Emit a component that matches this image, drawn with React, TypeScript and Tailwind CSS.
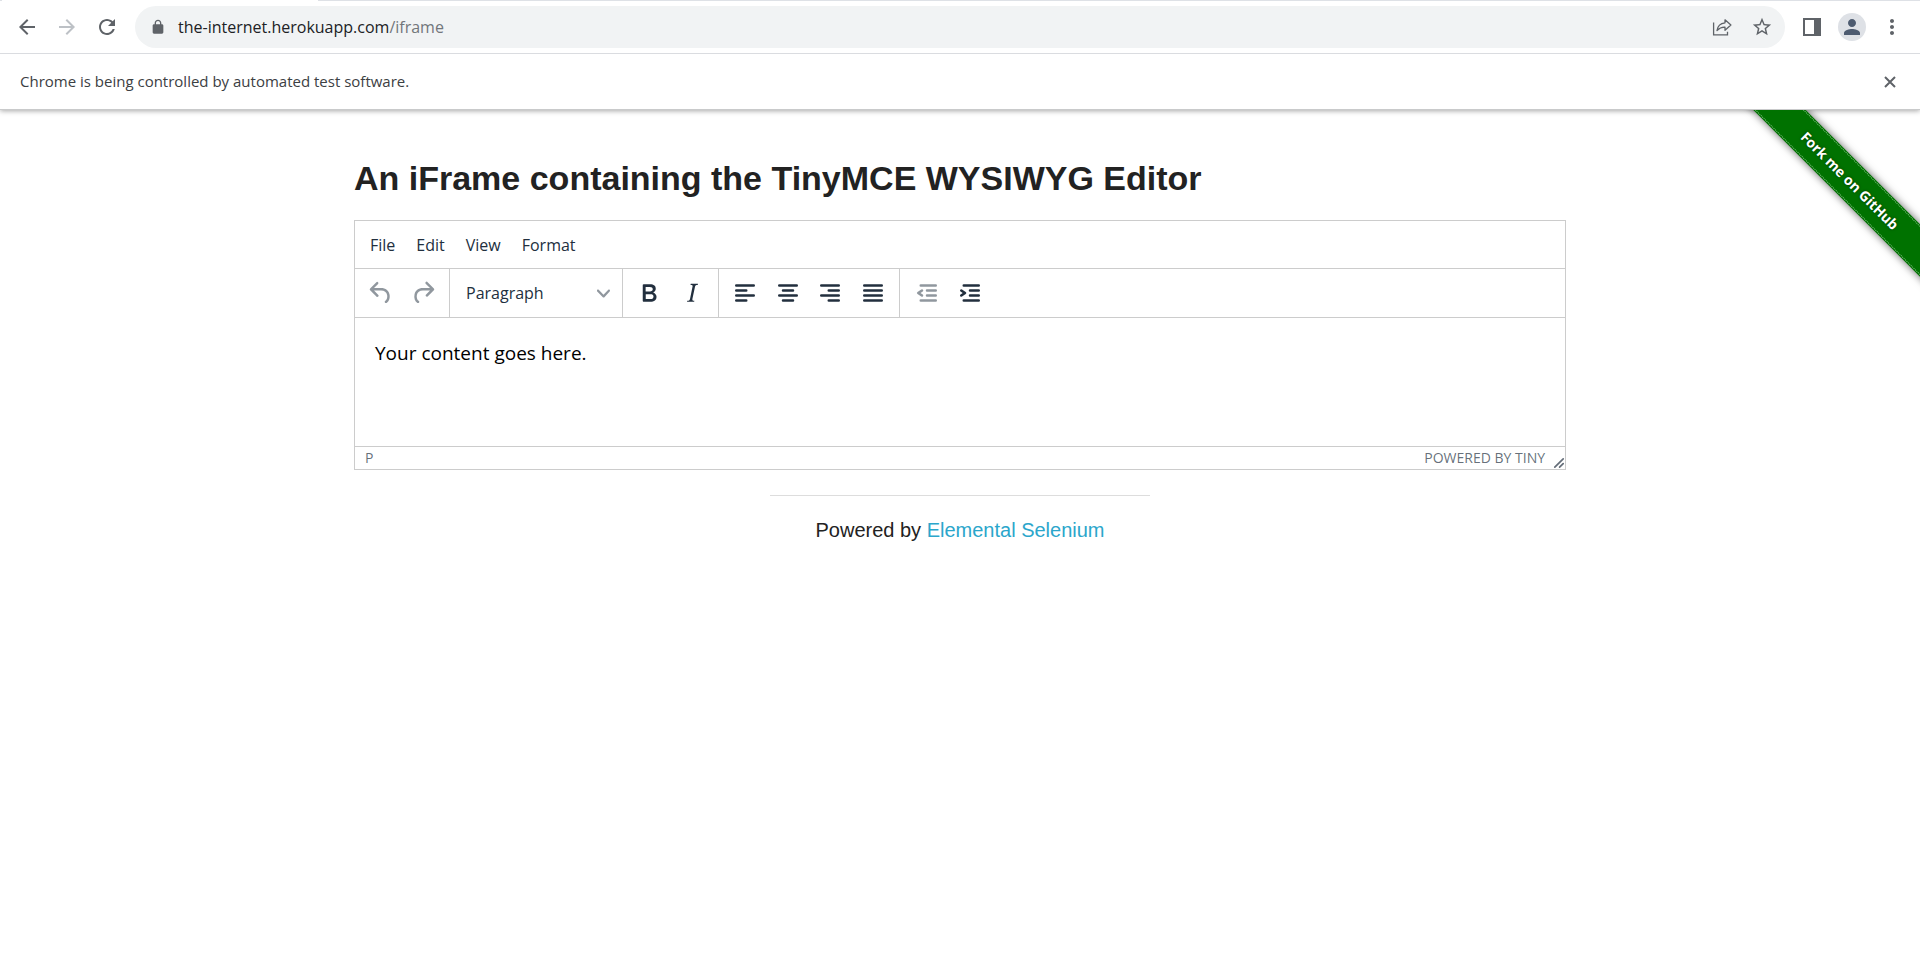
import type { ReactNode } from "react";

type IconProps = { d: string; className?: string; viewBox?: string };

function Icon({ d, className = "size-6", viewBox = "0 0 24 24" }: IconProps) {
  return (
    <svg viewBox={viewBox} className={className} fill="currentColor" fillRule="evenodd" aria-hidden="true">
      <path d={d} />
    </svg>
  );
}

const lock =
  "M18 8h-1V6c0-2.76-2.24-5-5-5S7 3.240 7 6v2H6c-1.100 0-2 .9-2 2v10c0 1.100.9 2 2 2h12c1.100 0 2-.9 2-2V10c0-1.100-.9-2-2-2zM9 6c0-1.660 1.340-3 3-3s3 1.340 3 3v2H9V6z";
const star =
  "M22 9.240l-7.190-.62L12 2 9.190 8.630 2 9.240l5.460 4.730L5.820 21 12 17.270 18.180 21l-1.630-7.030L22 9.240zM12 15.400l-3.760 2.270 1-4.280-3.320-2.880 4.380-.38L12 6.100l1.710 4.040 4.380.38-3.320 2.880 1 4.280L12 15.400z";

const editorIcons = {
  undo: "M6.400 8H12c3.700 0 6.200 2 6.800 5.100.6 2.700-.4 5.600-2.300 6.800a1 1 0 0 1-1-1.800c1.100-.6 1.800-2.700 1.400-4.600-.5-2.100-2.100-3.500-4.900-3.500H6.400l3.300 3.300a1 1 0 1 1-1.400 1.400l-5-5a1 1 0 0 1 0-1.400l5-5a1 1 0 0 1 1.400 1.400L6.400 8Z",
  redo: "M17.600 10H12c-2.800 0-4.400 1.400-4.900 3.500-.4 2 .3 4 1.400 4.600a1 1 0 1 1-1 1.800c-2-1.200-2.900-4.100-2.300-6.800.6-3 3-5.100 6.800-5.100h5.600l-3.300-3.300a1 1 0 1 1 1.400-1.400l5 5a1 1 0 0 1 0 1.400l-5 5a1 1 0 0 1-1.400-1.400l3.300-3.300Z",
  bold: "M7.800 19c-.3 0-.5 0-.6-.2l-.2-.5V5.700c0-.2 0-.4.2-.5l.6-.2h5c1.500 0 2.700.3 3.500 1 .7.6 1.100 1.400 1.100 2.500a3 3 0 0 1-.6 1.900c-.4.6-1 1-1.600 1.200.4.1.9.3 1.300.6s.8.7 1 1.200c.4.4.5 1 .5 1.600 0 1.300-.4 2.300-1.300 3-.8.7-2.100 1-3.800 1H7.800Zm5-8.300c.6 0 1.200-.1 1.600-.5.4-.3.6-.7.6-1.300 0-1.100-.8-1.700-2.300-1.700H9.300v3.500h3.400Zm.5 6c.7 0 1.300-.1 1.700-.4.4-.4.6-.9.6-1.500s-.2-1-.7-1.400c-.4-.3-1-.4-2-.4H9.400v3.800h4Z",
  italic:
    "M16.700 4.700l-.1.9h-.3c-.6 0-1 0-1.400.3-.3.3-.4.6-.5 1.100l-2.100 9.800v.6c0 .5.4.8 1.400.8h.2l-.2.8H8l.2-.8h.2c1.100 0 1.800-.5 2-1.500l2-9.800.1-.5c0-.6-.4-.8-1.400-.8h-.3l.2-.9h5.800Z",
  left: "M5 5h14a1 1 0 0 1 0 2H5a1 1 0 1 1 0-2Zm0 4h8a1 1 0 0 1 0 2H5a1 1 0 1 1 0-2Zm0 8h8a1 1 0 0 1 0 2H5a1 1 0 0 1 0-2Zm0-4h14a1 1 0 0 1 0 2H5a1 1 0 0 1 0-2Z",
  center:
    "M5 5h14a1 1 0 0 1 0 2H5a1 1 0 1 1 0-2Zm3 4h8a1 1 0 0 1 0 2H8a1 1 0 1 1 0-2Zm0 8h8a1 1 0 0 1 0 2H8a1 1 0 0 1 0-2Zm-3-4h14a1 1 0 0 1 0 2H5a1 1 0 0 1 0-2Z",
  right:
    "M5 5h14a1 1 0 0 1 0 2H5a1 1 0 1 1 0-2Zm6 4h8a1 1 0 0 1 0 2h-8a1 1 0 0 1 0-2Zm0 8h8a1 1 0 0 1 0 2h-8a1 1 0 0 1 0-2Zm-6-4h14a1 1 0 0 1 0 2H5a1 1 0 0 1 0-2Z",
  justify:
    "M5 5h14a1 1 0 0 1 0 2H5a1 1 0 1 1 0-2Zm0 4h14a1 1 0 0 1 0 2H5a1 1 0 1 1 0-2Zm0 4h14a1 1 0 0 1 0 2H5a1 1 0 0 1 0-2Zm0 4h14a1 1 0 0 1 0 2H5a1 1 0 0 1 0-2Z",
  outdent:
    "M7 5h12a1 1 0 0 1 0 2H7a1 1 0 1 1 0-2Zm5 4h7a1 1 0 0 1 0 2h-7a1 1 0 0 1 0-2Zm0 4h7a1 1 0 0 1 0 2h-7a1 1 0 0 1 0-2Zm-5 4h12a1 1 0 0 1 0 2H7a1 1 0 0 1 0-2Zm1.600-3.800a1 1 0 0 1-1.200 1.600l-3-2a1 1 0 0 1 0-1.600l3-2a1 1 0 0 1 1.200 1.600L6.800 12l1.800 1.200Z",
  indent:
    "M7 5h12a1 1 0 0 1 0 2H7a1 1 0 1 1 0-2Zm5 4h7a1 1 0 0 1 0 2h-7a1 1 0 0 1 0-2Zm0 4h7a1 1 0 0 1 0 2h-7a1 1 0 0 1 0-2Zm-5 4h12a1 1 0 0 1 0 2H7a1 1 0 0 1 0-2Zm-2.600-3.800L6.200 12l-1.800-1.200a1 1 0 0 1 1.200-1.600l3 2a1 1 0 0 1 0 1.600l-3 2a1 1 0 1 1-1.200-1.600Z",
};

function IconButton({ label, children, className = "" }: { label: string; children: ReactNode; className?: string }) {
  return (
    <button type="button" aria-label={label} className={`flex shrink-0 items-center justify-center ${className}`}>
      {children}
    </button>
  );
}

function TabStripEdge() {
  return (
    <div className="flex h-px bg-[#dee1e6]">
      <div className="ml-[2px] w-[316px] bg-white" />
    </div>
  );
}

function BrowserBar() {
  return (
    <header className="relative z-10 flex h-[53px] items-center border-b border-[#dadce0] bg-white pr-2 pl-[7px] text-[#5f6368]">
      <IconButton label="Back" className="size-10">
        <Icon d="M20 11H7.830l5.590-5.590L12 4l-8 8 8 8 1.410-1.410L7.830 13H20v-2z" />
      </IconButton>
      <IconButton label="Forward" className="size-10 text-[#bdc1c6]">
        <Icon d="M12 4l-1.410 1.410L16.170 11H4v2h12.170l-5.580 5.590L12 20l8-8-8-8z" />
      </IconButton>
      <IconButton label="Reload" className="size-10">
        <Icon d="M17.650 6.350C16.200 4.900 14.210 4 12 4c-4.420 0-7.990 3.580-7.990 8s3.570 8 7.990 8c3.730 0 6.840-2.550 7.730-6h-2.080c-.82 2.330-3.040 4-5.650 4-3.310 0-6-2.690-6-6s2.690-6 6-6c1.660 0 3.140.69 4.220 1.780L13 11h7V4l-2.350 2.350z" />
      </IconButton>
      <div className="ml-2 flex h-[42px] flex-1 items-center rounded-full bg-[#f1f3f4] pr-[3px] pl-[15px]">
        <Icon d={lock} className="size-4" />
        <a
          href="#"
          aria-label="Address"
          className="ml-3 flex-1 font-['Open_Sans','Noto_Sans',sans-serif] text-base text-[#202124]"
        >
          the-internet.herokuapp.com<span className="text-[#72767b]">/iframe</span>
        </a>
        <IconButton label="Share" className="size-10">
          <svg viewBox="0 0 20 20" className="size-5" fill="none" stroke="currentColor" aria-hidden="true">
            <path strokeWidth="1.300" d="M1.600 5.500v12.300h13.900v-3.100" />
            <path
              strokeWidth="1.300"
              strokeLinejoin="round"
              d="M13 2.800 18.900 8l-5.900 5.200v-3c-3.500-.2-5.700.9-8 3.300.6-4.200 3.200-7.200 8-7.700v-3Z"
            />
          </svg>
        </IconButton>
        <IconButton label="Bookmark this tab" className="size-10">
          <Icon d={star} className="size-[22px]" />
        </IconButton>
      </div>
      <div className="ml-[7px] flex items-center">
        <IconButton label="Side panel" className="size-10">
          <svg viewBox="0 0 18 18" className="size-[18px]" fill="currentColor" fillRule="evenodd" aria-hidden="true">
            <path d="M0 0h18v18H0V0Zm2 2v14h9V2H2Z" />
          </svg>
        </IconButton>
        <IconButton label="Profile" className="size-10">
          <span className="flex size-7 items-center justify-center rounded-full bg-[#dee1e6] text-[#4d5b70]">
            <Icon
              d="M12 12c2.210 0 4-1.790 4-4s-1.790-4-4-4-4 1.790-4 4 1.790 4 4 4zm0 2c-2.670 0-8 1.340-8 4v2h16v-2c0-2.660-5.330-4-8-4z"
              className="size-6"
            />
          </span>
        </IconButton>
        <IconButton label="Menu" className="size-10">
          <Icon
            d="M12 8c1.100 0 2-.9 2-2s-.9-2-2-2-2 .9-2 2 .9 2 2 2zm0 2c-1.100 0-2 .9-2 2s.9 2 2 2 2-.9 2-2-.9-2-2-2zm0 6c-1.100 0-2 .9-2 2s.9 2 2 2 2-.9 2-2-.9-2-2-2z"
          />
        </IconButton>
      </div>
    </header>
  );
}

function InfoBar() {
  return (
    <div className="relative flex h-14 items-center justify-between border-b border-[#c9cacb] bg-white pr-[10px] pl-5 shadow-[0_1px_5px_rgba(0,0,0,0.35)]">
      <p className="font-['Open_Sans','Noto_Sans',sans-serif] text-[15px] text-[#3c4043]">
        Chrome is being controlled by automated test software.
      </p>
      <IconButton label="Close" className="size-10 text-[#5f6368]">
        <svg viewBox="0 0 12 12" className="size-3" fill="none" stroke="currentColor" strokeWidth="2" aria-hidden="true">
          <path d="m1 1 10 10M11 1 1 11" />
        </svg>
      </IconButton>
    </div>
  );
}

function Ribbon() {
  return (
    <div className="absolute top-0 right-0 size-[190px] overflow-hidden">
      <a
        href="#"
        className="absolute top-[52px] -left-5 flex h-[37px] w-[280px] rotate-45 items-center justify-center bg-[#007200] py-px font-['Open_Sans',sans-serif] text-sm font-bold text-white shadow-[0_0_8px_rgba(0,0,0,0.6)]"
      >
        <span className="flex h-full w-full items-center justify-center border-y border-dotted border-[#7fbf7f] [text-shadow:0_0_3px_rgba(0,0,0,0.5)]">
          Fork me on GitHub
        </span>
      </a>
    </div>
  );
}

function ToolButton({ label, icon, disabled }: { label: string; icon: string; disabled?: boolean }) {
  return (
    <button
      type="button"
      aria-label={label}
      disabled={disabled}
      className="flex h-10 flex-1 items-center justify-center text-[#222f3e] disabled:text-[#222f3e]/50"
    >
      <Icon d={icon} className="size-[30px]" />
    </button>
  );
}

function Editor() {
  return (
    <section className="border border-[#cccccc] bg-white font-['Open_Sans','Noto_Sans',sans-serif] text-base text-[#222f3e]">
      <nav className="flex h-[47px] items-center gap-[21px] px-[15px]">
        {["File", "Edit", "View", "Format"].map((item) => (
          <button key={item} type="button">
            {item}
          </button>
        ))}
      </nav>
      <div className="flex h-[49px] items-stretch border-t border-[#cccccc]">
        <div className="flex w-[95px] items-center border-r border-[#cccccc] px-[5px]">
          <ToolButton label="Undo" icon={editorIcons.undo} disabled />
          <ToolButton label="Redo" icon={editorIcons.redo} disabled />
        </div>
        <div className="relative flex w-[173px] items-center border-r border-[#cccccc]">
          <select aria-label="Blocks" className="h-10 w-full appearance-none bg-transparent pr-8 pl-4">
            <option>Paragraph</option>
          </select>
          <Icon
            d="M8.700 2.200c.3-.3.8-.3 1 0 .4.4.4.9 0 1.200L5.700 7.800c-.3.3-.9.3-1.200 0L.2 3.400a.8.8 0 0 1 0-1.200c.3-.3.8-.3 1.100 0L5 6l3.700-3.800Z"
            viewBox="0 0 10 10"
            className="pointer-events-none absolute right-3 size-[13px] text-[#222f3e]/50"
          />
        </div>
        <div className="flex w-24 items-center border-r border-[#cccccc] px-[5px]">
          <ToolButton label="Bold" icon={editorIcons.bold} />
          <ToolButton label="Italic" icon={editorIcons.italic} />
        </div>
        <div className="flex w-[181px] items-center border-r border-[#cccccc] px-[5px]">
          <ToolButton label="Align left" icon={editorIcons.left} />
          <ToolButton label="Align center" icon={editorIcons.center} />
          <ToolButton label="Align right" icon={editorIcons.right} />
          <ToolButton label="Justify" icon={editorIcons.justify} />
        </div>
        <div className="flex w-24 items-center px-[5px]">
          <ToolButton label="Decrease indent" icon={editorIcons.outdent} disabled />
          <ToolButton label="Increase indent" icon={editorIcons.indent} />
        </div>
      </div>
      <textarea
        aria-label="Rich Text Area"
        defaultValue="Your content goes here."
        className="block h-[129px] w-full resize-none border-t border-[#cccccc] px-5 py-5 text-[19px] leading-[30px] text-black outline-none"
      />
      <div className="flex h-[23px] items-center border-t border-[#cccccc] pl-[10px] text-sm text-[#222f3e]/70">
        <button type="button">P</button>
        <a href="#" className="ml-auto">
          POWERED BY TINY
        </a>
        <Icon
          d="M8.100 1.100A.5.500 0 1 1 9 2l-7 7A.5.500 0 1 1 1 8l7-7ZM8.100 5.100A.5.500 0 1 1 9 6l-3 3A.5.500 0 1 1 5 8l3-3Z"
          viewBox="0 0 10 10"
          className="ml-2 size-3 self-end"
        />
      </div>
    </section>
  );
}

export default function App() {
  return (
    <div className="min-h-screen bg-white font-['Liberation_Sans',Arial,sans-serif] text-[#222222]">
      <TabStripEdge />
      <BrowserBar />
      <InfoBar />
      <div className="relative">
        <Ribbon />
        <main className="mx-auto max-w-[1212px] pt-11">
          <h3 className="mb-[18px] text-[34px] leading-[48px] font-bold">An iFrame containing the TinyMCE WYSIWYG Editor</h3>
          <Editor />
        </main>
        <footer className="mx-auto mt-[25px] w-[380px] border-t border-[#dddddd] pt-[18px] text-center text-xl leading-8">
          Powered by{" "}
          <a href="#" className="text-[#2ba6cb]">
            Elemental Selenium
          </a>
        </footer>
      </div>
    </div>
  );
}
